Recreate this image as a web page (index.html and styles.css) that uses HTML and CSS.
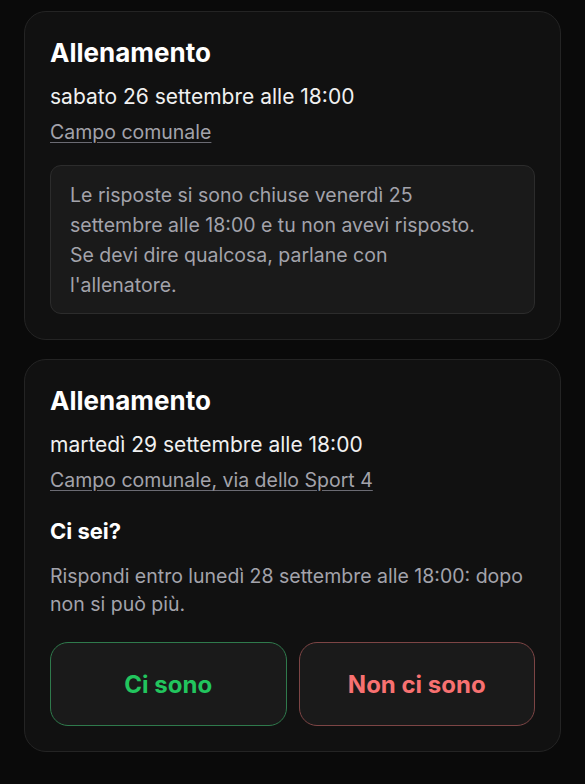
FILE: index.html
```html
<!DOCTYPE html>
<html lang="it">
<head>
<meta charset="utf-8">
<title>Allenamenti</title>
<link rel="stylesheet" href="styles.css">
</head>
<body>
<main class="list">
  <article class="card">
    <h2 class="title">Allenamento</h2>
    <p class="when">sabato 26 settembre alle 18:00</p>
    <a class="place" href="#">Campo comunale</a>
    <div class="notice">Le risposte si sono chiuse venerdì 25 settembre alle 18:00 e tu non avevi risposto. Se devi dire qualcosa, parlane con l'allenatore.</div>
  </article>
  <article class="card">
    <h2 class="title">Allenamento</h2>
    <p class="when">martedì 29 settembre alle 18:00</p>
    <a class="place" href="#">Campo comunale, via dello Sport 4</a>
    <h3 class="question">Ci sei?</h3>
    <p class="hint">Rispondi entro lunedì 28 settembre alle 18:00: dopo non si può più.</p>
    <div class="actions">
      <button class="btn btn-yes" type="button">Ci sono</button>
      <button class="btn btn-no" type="button">Non ci sono</button>
    </div>
  </article>
</main>
</body>
</html>
```
FILE: styles.css
```css
* { box-sizing: border-box; }
html, body { margin: 0; padding: 0; background: #0a0a0a; }
body {
  font-family: Inter, "Noto Sans", sans-serif;
  color: #f5f5f5;
}
.list {
  display: flex;
  flex-direction: column;
  gap: 19px;
  padding: 11px 24px 20px 24px;
}
.card {
  display: flex;
  flex-direction: column;
  background: #111111;
  border: 1px solid #242424;
  border-radius: 22px;
  padding: 25px 25px 25px 25px;
}
.title {
  margin: 0;
  font-size: 26px;
  font-weight: 700;
  line-height: 32px;
  color: #ffffff;
}
.when {
  margin: 14px 0 0 0;
  font-size: 21px;
  line-height: 28px;
  color: #f0f0f0;
}
.place {
  margin-top: 8px;
  align-self: flex-start;
  font-size: 19.5px;
  line-height: 26px;
  color: #a3a3ab;
  text-decoration: underline;
  text-decoration-color: #6b6b73;
  text-underline-offset: 3px;
}
.notice {
  margin-top: 20px;
  background: #1a1a1a;
  border: 1px solid #2c2c2c;
  border-radius: 11px;
  padding: 14px 38px 13px 19px;
  font-size: 19.5px;
  line-height: 30px;
  color: #a3a3ab;
}
.question {
  margin: 24px 0 0 0;
  font-size: 22px;
  font-weight: 700;
  line-height: 28px;
  color: #ffffff;
}
.hint {
  margin: 17px 0 0 0;
  font-size: 19.5px;
  line-height: 28px;
  color: #a3a3ab;
}
.actions {
  margin-top: 24px;
  display: grid;
  grid-template-columns: 1fr 1fr;
  gap: 12px;
}
.btn {
  height: 84px;
  background: #1a1a1a;
  border-radius: 18px;
  font-family: Inter, "Noto Sans", sans-serif;
  font-size: 24px;
  font-weight: 700;
  cursor: pointer;
}
.btn-yes {
  border: 1px solid #2f7a4c;
  color: #22c55e;
}
.btn-no {
  border: 1px solid #7d4545;
  color: #f87171;
}
```
